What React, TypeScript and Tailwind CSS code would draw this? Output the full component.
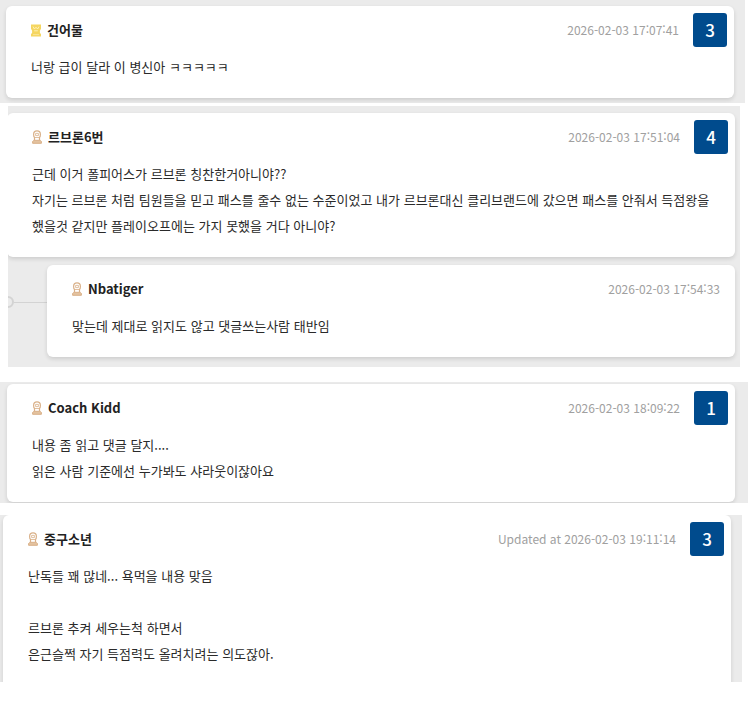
import { clsx } from 'clsx'

interface Comment {
  author: string
  badge: 'gold' | 'bronze'
  time: string
  votes?: number
  lines: string[]
}

interface CommentCardProps {
  comment: Comment
  className?: string
}

const comments: Record<string, Comment> = {
  first: {
    author: '건어물',
    badge: 'gold',
    time: '2026-02-03 17:07:41',
    votes: 3,
    lines: ['너랑 급이 달라 이 병신아 ㅋㅋㅋㅋㅋ'],
  },
  second: {
    author: '르브론6번',
    badge: 'bronze',
    time: '2026-02-03 17:51:04',
    votes: 4,
    lines: [
      '근데 이거 폴피어스가 르브론 칭찬한거아니야??',
      '자기는 르브론 처럼 팀원들을 믿고 패스를 줄수 없는 수준이었고 내가 르브론대신 클리브랜드에 갔으면 패스를 안줘서 득점왕을',
      '했을것 같지만 플레이오프에는 가지 못했을 거다 아니야?',
    ],
  },
  reply: {
    author: 'Nbatiger',
    badge: 'bronze',
    time: '2026-02-03 17:54:33',
    lines: ['맞는데 제대로 읽지도 않고 댓글쓰는사람 태반임'],
  },
  third: {
    author: 'Coach Kidd',
    badge: 'bronze',
    time: '2026-02-03 18:09:22',
    votes: 1,
    lines: ['내용 좀 읽고 댓글 달지....', '읽은 사람 기준에선 누가봐도 샤라웃이잖아요'],
  },
  fourth: {
    author: '중구소년',
    badge: 'bronze',
    time: 'Updated at 2026-02-03 19:11:14',
    votes: 3,
    lines: ['난독들 꽤 많네... 욕먹을 내용 맞음', '', '르브론 추켜 세우는척 하면서', '은근슬쩍 자기 득점력도 올려치려는 의도잖아.'],
  },
}

function GoldIcon() {
  return (
    <svg className="h-[13px] w-[10px] shrink-0" viewBox="0 0 10 13" fill="none">
      <path d="M0 .5h10v4.2L8.9 6.8v2l1.1 1.4v2.3H0v-2.3l1.1-1.4v-2L0 4.7z" fill="#f5d660" />
      <path d="M2 2.6l1.4 2.4L5 3.2 6.6 5 8 2.6M3.2 6.8h3.6" stroke="#fff3c0" strokeWidth=".9" />
      <path d="M2 10.6h6" stroke="#f9e59a" strokeWidth="1" />
    </svg>
  )
}

function BronzeIcon() {
  return (
    <svg className="h-[14px] w-[10px] shrink-0" viewBox="0 0 10 14" fill="none" stroke="#d9b088">
      <path d="M2.5 10V7.4C1.9 6.8 1.6 5.8 1.6 4.4 1.6 2 2.8.9 5 .9s3.4 1.1 3.4 3.5c0 1.4-.3 2.4-.9 3V10" strokeWidth="1.2" />
      <path d="M3.6 3.4h2.8v2.2H3.6zM2.5 7.5h5" strokeWidth=".8" />
      <path d="M1.8 10.3h6.4l1.2 1.2v1.8H.6v-1.8z" fill="#e3c29f" strokeWidth="1" />
    </svg>
  )
}

function CommentCard({ comment, className }: CommentCardProps) {
  return (
    <article className={clsx('rounded-md bg-white pb-[18px] shadow-[0_2px_4px_rgba(0,0,0,0.13)]', className)}>
      <header className="flex h-12 items-center pr-[7px] pl-[25px]">
        {comment.badge === 'gold' ? <GoldIcon /> : <BronzeIcon />}
        <span className="ml-1.5 text-[13px] font-bold text-[#222]">{comment.author}</span>
        <time className={clsx('ml-auto text-xs text-[#a0a0a0]', comment.votes ? 'mr-[14px]' : 'mr-2')}>
          {comment.time.split(':').map((part, i) => (
            <span key={i}>
              {i > 0 && <span className="align-[1px] leading-none">:</span>}
              {part}
            </span>
          ))}
        </time>
        {comment.votes && (
          <button className="flex size-[34px] items-center justify-center rounded-[3px] bg-[#004b8d] text-[17px] font-medium text-white">
            {comment.votes}
          </button>
        )}
      </header>
      <div className="pl-[25px] text-[13px] leading-[26px] tracking-[0.01px] whitespace-nowrap text-[#2a2a2a]">
        {comment.lines.map((line, i) => (
          <p key={i} className="h-[26px]">
            {line}
          </p>
        ))}
      </div>
    </article>
  )
}

export default function App() {
  return (
    <main lang="ko" className="h-[708px] w-[749px] overflow-hidden bg-white font-['Noto_Sans_CJK_KR',sans-serif]">
      <section className="h-[103px] w-[745px] overflow-hidden bg-[#ebebeb] pt-1.5 pr-[11px] pl-1.5">
        <CommentCard comment={comments.first} />
      </section>

      <section className="mt-[3px] ml-2 h-[261px] w-[732px] overflow-hidden bg-[#ebebeb] pt-[7px] pr-[5px]">
        <CommentCard comment={comments.second} className="-ml-px" />
        {/* Reply thread */}
        <div className="mt-2 flex">
          <div className="-ml-1.5 flex h-[74px] w-[45px] items-center">
            <span className="size-3 shrink-0 rounded-full border-2 border-[#d3d3d3]" />
            <span className="h-px grow bg-[#d3d3d3]" />
          </div>
          <CommentCard comment={comments.reply} className="grow" />
        </div>
      </section>

      <section className="mt-[15px] h-[121px] w-[748px] overflow-hidden bg-[#ebebeb] pt-0.5 pr-[13px] pl-[7px]">
        <CommentCard comment={comments.third} />
      </section>

      <section className="mt-3 h-[167px] w-[742px] overflow-hidden bg-[#ebebeb] pr-[11px] pl-[3px]">
        <CommentCard comment={comments.fourth} className="rounded-b-none" />
      </section>
    </main>
  )
}
